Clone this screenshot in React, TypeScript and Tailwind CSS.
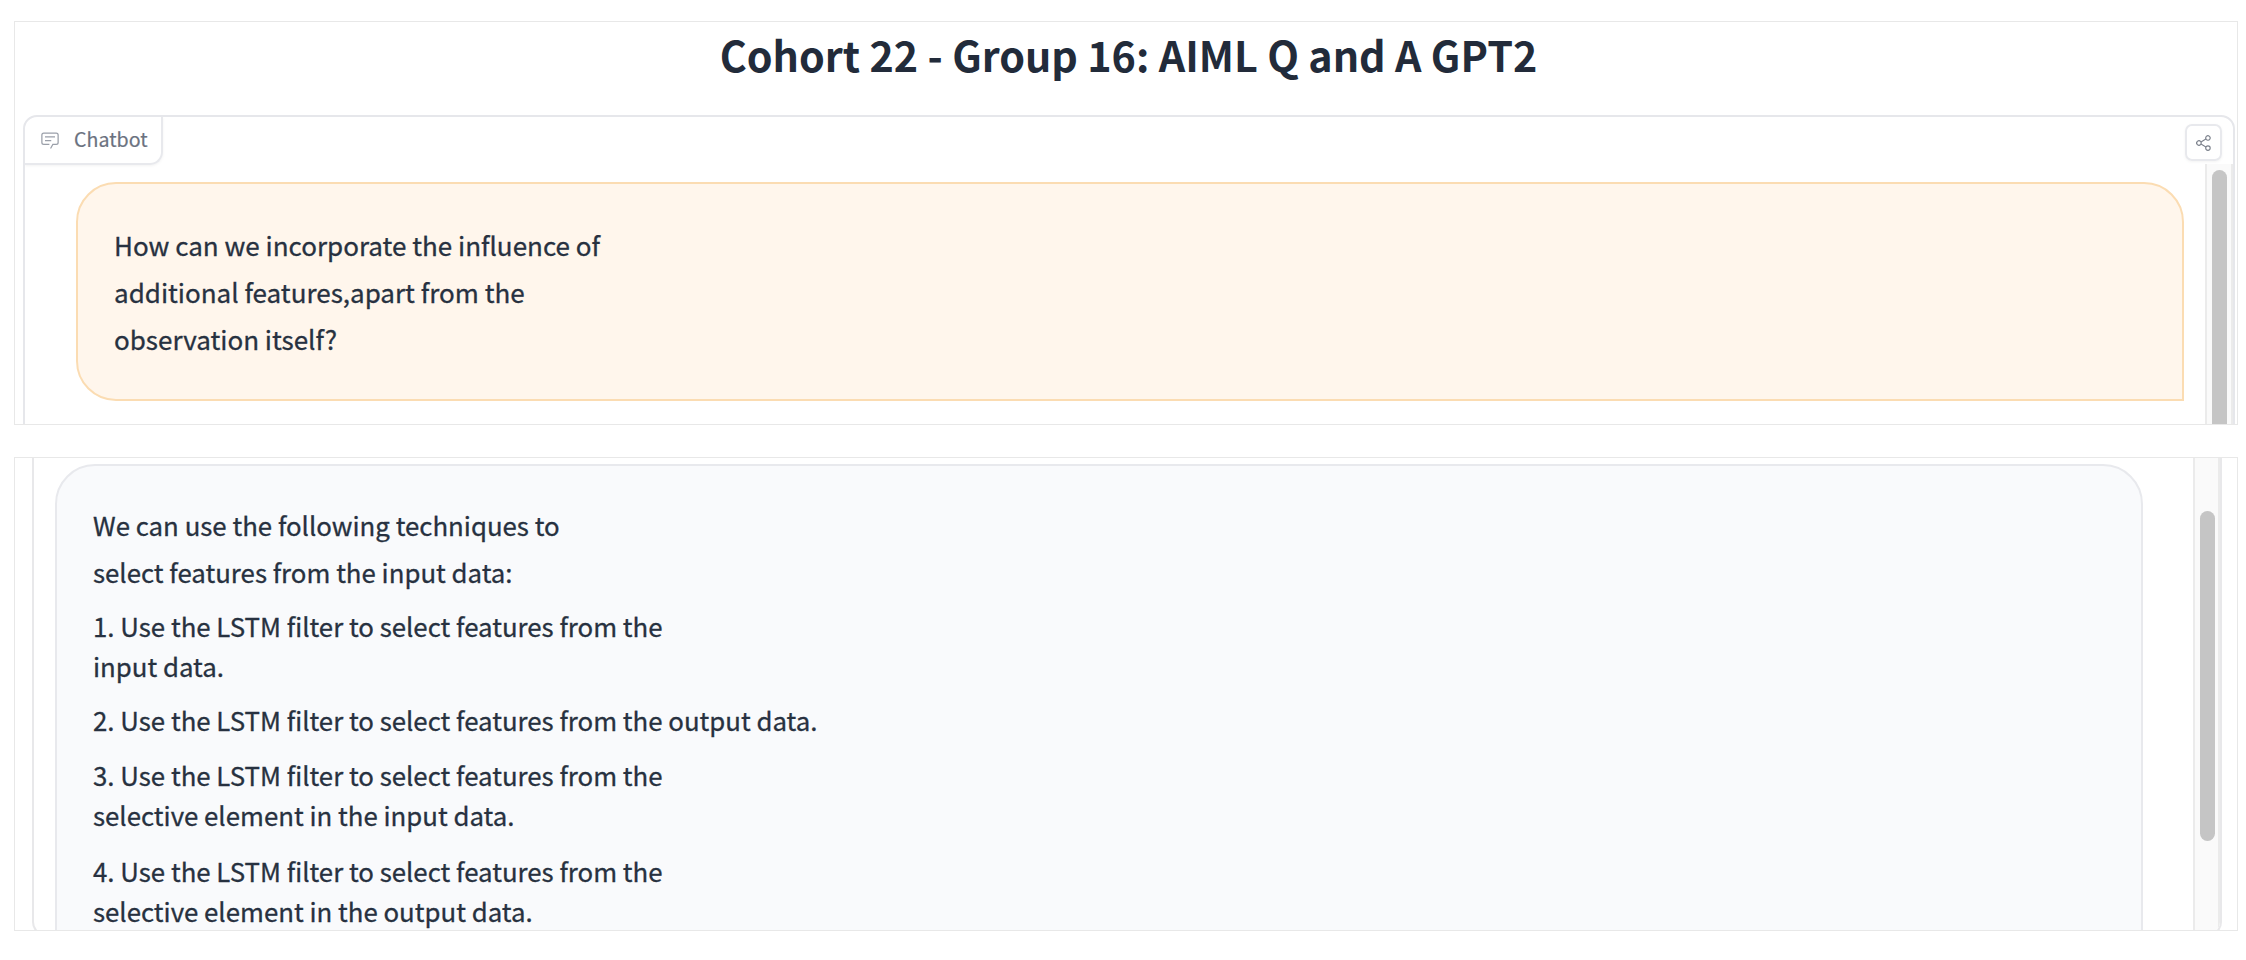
import React from "react";

const questionLines = [
  "How can we incorporate the influence of",
  "additional features,apart from the",
  "observation itself?",
];

function Line({ children, className }: { children: React.ReactNode; className: string }) {
  return <p className={`whitespace-nowrap ${className}`}>{children}</p>;
}

function ChatIcon() {
  return (
    <svg width="20" height="20" viewBox="0 0 32 32" fill="#9a9fa9" className="shrink-0">
      <path d="M17.74 30L16 29l4-7h6a2 2 0 0 0 2-2V8a2 2 0 0 0-2-2H6a2 2 0 0 0-2 2v12a2 2 0 0 0 2 2h9v2H6a4 4 0 0 1-4-4V8a4 4 0 0 1 4-4h20a4 4 0 0 1 4 4v12a4 4 0 0 1-4 4h-4.84Z" />
      <path d="M8 10h16v2H8zm0 6h10v2H8z" />
    </svg>
  );
}

function ShareIcon() {
  return (
    <svg width="18" height="18" viewBox="0 0 32 32" fill="#7b808b">
      <path d="M23 20a5 5 0 0 0-3.89 1.89L11.8 17.32a4.46 4.46 0 0 0 0-2.64l7.31-4.57A5 5 0 1 0 18 7a4.79 4.79 0 0 0 .2 1.32l-7.31 4.57a5 5 0 1 0 0 6.22l7.31 4.57A4.79 4.79 0 0 0 18 25a5 5 0 1 0 5-5ZM23 4a3 3 0 1 1-3 3a3 3 0 0 1 3-3ZM7 19a3 3 0 1 1 3-3a3 3 0 0 1-3 3Zm16 9a3 3 0 1 1 3-3a3 3 0 0 1-3 3Z" />
    </svg>
  );
}

export default function App() {
  return (
    <main className="h-[960px] w-[2246px] overflow-hidden bg-white pl-[14px] pt-[21px] font-['Noto_Sans_CJK_SC','Noto_Sans',sans-serif] text-[#273140]">
      <section className="h-[404px] w-[2224px] overflow-hidden border border-[#e8e8e8] pl-[8px]">
        <h1 className="h-[93px] pr-[3px] text-center text-[41.25px] font-bold leading-[65px] text-[#222b3a]">
          Cohort 22 - Group 16: AIML Q and A GPT2
        </h1>
        <div className="flex h-[400px] w-[2212px] justify-between overflow-hidden rounded-[14px] border-2 border-[#e6e7eb]">
          <div>
            <div className="flex h-[48px] w-[138px] items-center gap-[14px] rounded-br-[13px] border-b-2 border-r-2 border-[#e8e9ed] pl-[15px] text-[19.6px] text-[#6b7280] shadow-[0_1px_3px_rgba(0,0,0,0.05)] [-webkit-text-stroke:0.2px]">
              <ChatIcon />
              <span className="pb-[2px]">Chatbot</span>
            </div>
            <div className="ml-[51px] mt-[17px] h-[219px] w-[2108px] rounded-[40px] rounded-br-none border-2 border-[#fbdcb2] bg-[#fff6ec] pl-[36px] pt-[37px] text-[26px] leading-[47px] [-webkit-text-stroke:0.3px]">
              {questionLines.map((text) => (
                <Line key={text} className="h-[47px]">{text}</Line>
              ))}
            </div>
          </div>
          <div className="flex w-[49px] flex-col items-end">
            <div className="mr-[11px] mt-[7px] flex size-[37px] shrink-0 items-center justify-center rounded-[7px] border-2 border-[#e8e9ed] shadow-[0_1px_3px_rgba(0,0,0,0.05)]">
              <ShareIcon />
            </div>
            <div className="mt-[3px] h-[300px] w-[28px] border-l-2 border-r-2 border-[#ebebeb] bg-[#fafafa] pl-[5px] pt-[6px]">
              <div className="h-[300px] w-[15px] rounded-t-full bg-[#c5c5c5]" />
            </div>
          </div>
        </div>
      </section>

      <section className="mt-[32px] h-[474px] w-[2224px] overflow-hidden border border-[#e8e8e8] pl-[17px]">
        <div className="flex h-[478px] w-[2190px] justify-between overflow-hidden rounded-b-[14px] border-2 border-t-0 border-[#e8e8ea]">
          <div className="ml-[21px] mt-[6px] h-[520px] w-[2088px] rounded-t-[40px] border-2 border-[#e8e9ed] bg-[#f9fafc] pl-[36px] pt-[35px] text-[25.8px] [-webkit-text-stroke:0.3px]">
            <Line className="h-[47px] leading-[47px]">We can use the following techniques to</Line>
            <Line className="h-[47px] leading-[47px]">select features from the input data:</Line>
            <div className="mt-[11px] leading-[40px]">
              <Line className="h-[40px]">1. Use the LSTM filter to select features from the</Line>
              <Line className="h-[40px]">input data.</Line>
            </div>
            <Line className="mt-[14px] h-[40px] leading-[40px]">2. Use the LSTM filter to select features from the output data.</Line>
            <div className="mt-[15px] leading-[40px]">
              <Line className="h-[40px]">3. Use the LSTM filter to select features from the</Line>
              <Line className="h-[40px]">selective element in the input data.</Line>
            </div>
            <div className="mt-[16px] leading-[40px]">
              <Line className="h-[40px]">4. Use the LSTM filter to select features from the</Line>
              <Line className="h-[40px]">selective element in the output data.</Line>
            </div>
          </div>
          <div className="w-[27px] border-l-2 border-r-2 border-[#ebebeb] bg-[#fafafa] pl-[5px] pt-[53px]">
            <div className="h-[330px] w-[15px] rounded-full bg-[#c5c5c5]" />
          </div>
        </div>
      </section>
    </main>
  );
}
